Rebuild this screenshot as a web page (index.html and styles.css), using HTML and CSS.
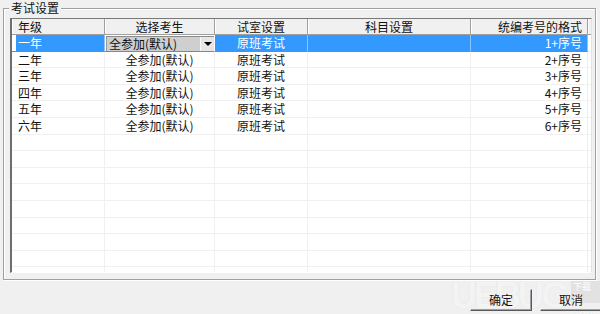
FILE: index.html
```html
<!DOCTYPE html>
<html lang="zh">
<head>
<meta charset="utf-8">
<link rel="stylesheet" href="styles.css">
</head>
<body>
<div class="window">
  <div class="group">
    <div class="legend">考试设置</div>
    <div class="grid">
      <div class="row head">
        <div class="c c1 left">年级</div>
        <div class="c c2">选择考生</div>
        <div class="c c3">试室设置</div>
        <div class="c c4">科目设置</div>
        <div class="c c5 right">统编考号的格式</div>
        <div class="c c6"></div>
      </div>
      <div class="row sel">
        <div class="c c1 left">一年</div>
        <div class="c c2 combo-cell"><div class="combo"><span class="combo-text">全参加(默认)</span><span class="combo-btn"><i class="tri"></i></span></div></div>
        <div class="c c3">原班考试</div>
        <div class="c c4"></div>
        <div class="c c5 right">1+序号</div>
        <div class="c c6"></div>
      </div>
      <div class="row"><div class="c c1 left">二年</div><div class="c c2">全参加(默认)</div><div class="c c3">原班考试</div><div class="c c4"></div><div class="c c5 right">2+序号</div><div class="c c6"></div></div>
      <div class="row"><div class="c c1 left">三年</div><div class="c c2">全参加(默认)</div><div class="c c3">原班考试</div><div class="c c4"></div><div class="c c5 right">3+序号</div><div class="c c6"></div></div>
      <div class="row"><div class="c c1 left">四年</div><div class="c c2">全参加(默认)</div><div class="c c3">原班考试</div><div class="c c4"></div><div class="c c5 right">4+序号</div><div class="c c6"></div></div>
      <div class="row"><div class="c c1 left">五年</div><div class="c c2">全参加(默认)</div><div class="c c3">原班考试</div><div class="c c4"></div><div class="c c5 right">5+序号</div><div class="c c6"></div></div>
      <div class="row"><div class="c c1 left">六年</div><div class="c c2">全参加(默认)</div><div class="c c3">原班考试</div><div class="c c4"></div><div class="c c5 right">6+序号</div><div class="c c6"></div></div>
      <div class="row"><div class="c c1"></div><div class="c c2"></div><div class="c c3"></div><div class="c c4"></div><div class="c c5"></div><div class="c c6"></div></div>
      <div class="row"><div class="c c1"></div><div class="c c2"></div><div class="c c3"></div><div class="c c4"></div><div class="c c5"></div><div class="c c6"></div></div>
      <div class="row"><div class="c c1"></div><div class="c c2"></div><div class="c c3"></div><div class="c c4"></div><div class="c c5"></div><div class="c c6"></div></div>
      <div class="row"><div class="c c1"></div><div class="c c2"></div><div class="c c3"></div><div class="c c4"></div><div class="c c5"></div><div class="c c6"></div></div>
      <div class="row"><div class="c c1"></div><div class="c c2"></div><div class="c c3"></div><div class="c c4"></div><div class="c c5"></div><div class="c c6"></div></div>
      <div class="row"><div class="c c1"></div><div class="c c2"></div><div class="c c3"></div><div class="c c4"></div><div class="c c5"></div><div class="c c6"></div></div>
      <div class="row"><div class="c c1"></div><div class="c c2"></div><div class="c c3"></div><div class="c c4"></div><div class="c c5"></div><div class="c c6"></div></div>
      <div class="row"><div class="c c1"></div><div class="c c2"></div><div class="c c3"></div><div class="c c4"></div><div class="c c5"></div><div class="c c6"></div></div>
      <div class="row"><div class="c c1"></div><div class="c c2"></div><div class="c c3"></div><div class="c c4"></div><div class="c c5"></div><div class="c c6"></div></div>
    </div>
  </div>
  <div class="buttons">
    <div class="btn">确定</div>
    <div class="btn">取消</div>
  </div>
  <div class="watermark" aria-hidden="true">
    <span class="wm-big">UEBUG</span>
    <span class="wm-side"><span class="wm-tag">下载站</span><span class="wm-com">.com</span></span>
  </div>
</div>
</body>
</html>
```

FILE: styles.css
```css
html, body {
  margin: 0;
  padding: 0;
}
body {
  background: #f0f0f0;
  font-family: "Noto Sans CJK SC", "Liberation Sans", sans-serif;
  font-size: 12px;
  color: #111;
  width: 600px;
  height: 314px;
  overflow: hidden;
}
.window {
  position: relative;
  width: 600px;
  height: 314px;
  padding-top: 8px;
  box-sizing: border-box;
}
.group {
  position: relative;
  margin: 0 4px 0 3px;
  border: 1px solid #a0a0a0;
  box-shadow: inset 1px 1px 0 #fff, 1px 1px 0 #fff;
  padding: 9px 3px 6px 6px;
}
.legend {
  position: absolute;
  top: -8px;
  left: 5px;
  padding: 0 2px;
  background: #f0f0f0;
  line-height: 14px;
  color: #111;
}
.grid {
  height: 253px;
  border-top: 1px solid #7a7a7a;
  border-left: 2px solid #6e6e6e;
  border-right: 1px solid #e3e3e3;
  border-bottom: 1px solid #fff;
  background: #fff;
  overflow: hidden;
}
.row {
  display: grid;
  grid-template-columns: 93px 110px 93px 163px 117px 1fr;
  height: 16.6px;
}
.c {
  border-right: 1px solid #f0f0f0;
  border-bottom: 1px solid #f0f0f0;
  text-align: center;
  line-height: 15.6px;
  white-space: nowrap;
  overflow: hidden;
}
.c6 {
  border-right: none;
}
.left {
  text-align: left;
  padding-left: 6px;
}
.right {
  text-align: right;
  padding-right: 5px;
}
.row.head {
  height: 16px;
  background: #f0f0f0;
}
.head .c {
  border-right: 1px solid #a0a0a0;
  box-shadow: inset 1px 0 0 #fff;
  border-bottom: 1px solid #a0a0a0;
  line-height: 15px;
  color: #111;
}
.head .c6 {
  border-right: none;
}
.sel .c {
  background: #3399ff;
  color: #fff;
  border-right-color: #8cc4ff;
  border-bottom-color: #3399ff;
}
.sel .c1 {
  background: linear-gradient(to right, #fff 4px, #3399ff 4px);
}
.sel .c6 {
  background: #fff;
  border-bottom-color: #f0f0f0;
}
.sel .combo-cell {
  background: #fff;
  padding: 1px 0 0 1px;
  border-right-color: #fff;
}
.combo {
  display: flex;
  height: 15px;
  background: #cfcfcf;
  border-top: 1px solid #8a8a8a;
  border-left: 1px solid #9a9a9a;
  box-sizing: border-box;
}
.combo-text {
  flex: 1;
  text-align: left;
  color: #111;
  padding-left: 2px;
  line-height: 13px;
}
.combo-btn {
  width: 13px;
  background: #e6e6e6;
  border-left: 1px solid #f8f8f8;
  display: flex;
  align-items: center;
  justify-content: center;
}
.tri {
  width: 0;
  height: 0;
  border-left: 4px solid transparent;
  border-right: 4px solid transparent;
  border-top: 4px solid #000;
}
.buttons {
  position: relative;
  z-index: 2;
  display: flex;
  justify-content: flex-end;
  gap: 8px;
  margin-top: 9px;
  margin-right: -2px;
}
.btn {
  width: 62px;
  height: 22px;
  box-sizing: border-box;
  border: 1px solid;
  border-color: transparent #5a5a5a #5a5a5a transparent;
  box-shadow: inset -1px -1px 0 #a0a0a0;
  background: transparent;
  text-align: center;
  line-height: 20px;
  color: #111;
}
.watermark {
  position: absolute;
  z-index: 1;
  left: 451px;
  top: 278px;
  display: flex;
  align-items: flex-start;
  gap: 3px;
  pointer-events: none;
}
.wm-big {
  font-family: "Liberation Sans", sans-serif;
  font-weight: bold;
  font-size: 36px;
  line-height: 36px;
  letter-spacing: -3px;
  color: rgba(255, 255, 255, 0.7);
  text-shadow: 0 0 1px rgba(170, 170, 170, 0.3);
}
.wm-side {
  display: flex;
  flex-direction: column;
  margin-left: 2px;
}
.wm-tag {
  font-size: 9px;
  line-height: 11px;
  padding: 0 2px;
  color: #fff;
  background: rgba(220, 220, 220, 0.7);
  margin-top: 3px;
}
.wm-com {
  font-family: "Liberation Sans", sans-serif;
  font-size: 14px;
  line-height: 18px;
  color: rgba(255, 255, 255, 0.8);
  text-shadow: 0 0 1px rgba(170, 170, 170, 0.3);
  margin-top: 3px;
}
```
